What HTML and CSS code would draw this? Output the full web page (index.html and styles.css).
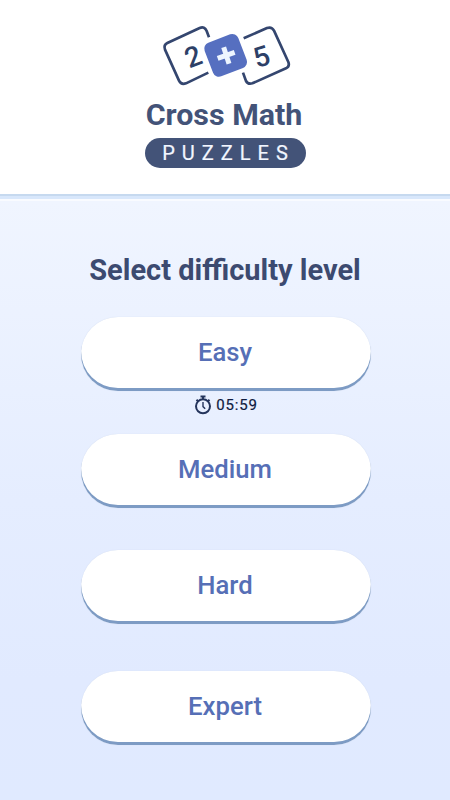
FILE: index.html
```html
<!DOCTYPE html>
<html lang="en">
<head>
<meta charset="utf-8">
<title>Cross Math Puzzles</title>
<link rel="stylesheet" href="styles.css">
</head>
<body>
<header class="header">
  <svg class="logo" viewBox="0 0 435 240" aria-hidden="true">
    <g class="card">
      <path d="M162 67 L155 48 Q149 33 134 39 L37 84 Q25 90 30 104 L72 197 Q79 211 93 205 L160 173"/>
      <path d="M266 70 L336 39 Q350 34 357 47 L400 141 Q405 154 393 160 L292 205 Q279 209 273 198 L264 173"/>
    </g>
    <rect class="plus-tile" x="158" y="67" width="108" height="108" rx="19" transform="rotate(-21 212 121)"/>
    <path class="plus" d="M188 130 L239 112 M206 97 L222 146"/>
    <text class="digit" x="114" y="154" transform="rotate(-21 114 124)">2</text>
    <text class="digit" x="319" y="154" transform="rotate(-17 319 124)">5</text>
  </svg>
  <h1 class="title">Cross Math</h1>
  <div class="tag"><span>PUZZLES</span></div>
</header>
<main class="main">
  <h2 class="heading">Select difficulty level</h2>
  <button class="level">Easy</button>
  <div class="timer">
    <svg class="watch" viewBox="0 0 18 20" aria-hidden="true">
      <circle cx="9" cy="11.3" r="7"/>
      <path d="M6.5 1.5h5M9 1.5v3M2.5 4.8l1.8 1.7M15.5 4.8l-1.8 1.7"/>
      <path class="hand" d="M9 7v4.6l2.2 2.2"/>
    </svg>
    <span>05:59</span>
  </div>
  <button class="level">Medium</button>
  <button class="level hard">Hard</button>
  <button class="level expert">Expert</button>
</main>
</body>
</html>
```
FILE: styles.css
```css
* { box-sizing: border-box; }
body {
  margin: 0;
  height: 800px;
  display: flex;
  flex-direction: column;
  overflow: hidden;
  font-family: Roboto, sans-serif;
  background: #fff;
}
.header {
  height: 199px;
  flex: none;
  padding-top: 15px;
  display: flex;
  flex-direction: column;
  align-items: center;
  background: linear-gradient(#fff 194px, #c6d9ef 194px, #c6d9ef 196px, #d8e7fb 196px);
}
.logo { width: 145px; height: 80px; margin-left: 4px; }
.card { fill: none; stroke: #34466f; stroke-width: 8; stroke-linecap: butt; stroke-linejoin: round; }
.plus-tile { fill: #566fc0; }
.plus { fill: none; stroke: #edf5ff; stroke-width: 15; }
.digit { font-size: 84px; font-weight: 500; text-anchor: middle; fill: #2d4067; }
.title {
  margin: 2px 2px 0 0;
  height: 36px;
  line-height: 36px;
  font-size: 30.4px;
  font-weight: 700;
  white-space: nowrap;
  color: #435378;
}
.tag {
  width: 161px;
  height: 30px;
  margin-top: 5px;
  border-radius: 15px;
  background: #435378;
  color: #f2f6ff;
  display: flex;
  justify-content: center;
  align-items: center;
  font-size: 20px;
  letter-spacing: 7px;
  -webkit-text-stroke: .2px #f2f6ff;
}
.tag span { margin-right: -7px; }
.main {
  flex: 1;
  display: flex;
  flex-direction: column;
  align-items: center;
  padding-top: 51px;
  border-top: 2px solid #f9fbff;
  background: linear-gradient(#f0f5ff, #e5edff 50%, #e1eaff 80%, #e0eaff);
}
.heading {
  margin: 0 0 29px;
  height: 36px;
  line-height: 36px;
  font-size: 29px;
  font-weight: 700;
  white-space: nowrap;
  color: #3c4a70;
}
.level {
  flex: none;
  width: 290px;
  height: 74px;
  padding: 0 1px 3px 0;
  margin-left: 1px;
  border: 0;
  border-radius: 37px;
  background: #fff;
  box-shadow: inset 0 -3px 0 #7d9bc4, 0 0 1px #c9d5ea;
  font: 500 25.7px/71px Roboto, sans-serif;
  color: #566fb6;
}
.timer {
  height: 43px;
  padding-top: 4px;
  margin-left: 2px;
  display: flex;
  align-items: flex-start;
  gap: 4px;
  font-size: 15px;
  line-height: 21px;
  letter-spacing: .8px;
  color: #0f1b3f;
  -webkit-text-stroke: .2px #0f1b3f;
}
.watch { width: 18px; height: 20px; fill: none; stroke: #24345c; stroke-width: 2; }
.hand { stroke-width: 1.4; }
.hard { margin-top: 42px; }
.expert { margin-top: 47px; }
```
